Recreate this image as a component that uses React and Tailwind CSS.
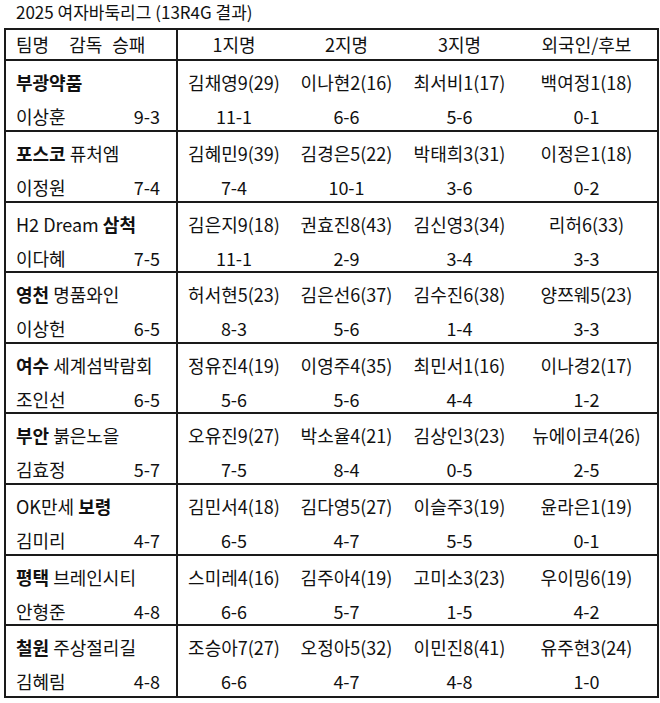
import React from "react";

const teams = [
  {
    name: [["부광약품", true]],
    coach: "이상훈",
    record: "9-3",
    h: "h-[71px]",
    players: [
      ["김채영9(29)", "11-1"],
      ["이나현2(16)", "6-6"],
      ["최서비1(17)", "5-6"],
      ["백여정1(18)", "0-1"],
    ],
  },
  {
    name: [["포스코", true], [" 퓨처엠", false]],
    coach: "이정원",
    record: "7-4",
    h: "h-[71px]",
    players: [
      ["김혜민9(39)", "7-4"],
      ["김경은5(22)", "10-1"],
      ["박태희3(31)", "3-6"],
      ["이정은1(18)", "0-2"],
    ],
  },
  {
    name: [["H2 Dream ", false], ["삼척", true]],
    coach: "이다혜",
    record: "7-5",
    h: "h-[70px]",
    players: [
      ["김은지9(18)", "11-1"],
      ["권효진8(43)", "2-9"],
      ["김신영3(34)", "3-4"],
      ["리허6(33)", "3-3"],
    ],
  },
  {
    name: [["영천", true], [" 명품와인", false]],
    coach: "이상헌",
    record: "6-5",
    h: "h-[71px]",
    players: [
      ["허서현5(23)", "8-3"],
      ["김은선6(37)", "5-6"],
      ["김수진6(38)", "1-4"],
      ["양쯔웨5(23)", "3-3"],
    ],
  },
  {
    name: [["여수", true], [" 세계섬박람회", false]],
    coach: "조인선",
    record: "6-5",
    h: "h-[70px]",
    players: [
      ["정유진4(19)", "5-6"],
      ["이영주4(35)", "5-6"],
      ["최민서1(16)", "4-4"],
      ["이나경2(17)", "1-2"],
    ],
  },
  {
    name: [["부안", true], [" 붉은노을", false]],
    coach: "김효정",
    record: "5-7",
    h: "h-[71px]",
    players: [
      ["오유진9(27)", "7-5"],
      ["박소율4(21)", "8-4"],
      ["김상인3(23)", "0-5"],
      ["뉴에이코4(26)", "2-5"],
    ],
  },
  {
    name: [["OK만세 ", false], ["보령", true]],
    coach: "김미리",
    record: "4-7",
    h: "h-[71px]",
    players: [
      ["김민서4(18)", "6-5"],
      ["김다영5(27)", "4-7"],
      ["이슬주3(19)", "5-5"],
      ["윤라은1(19)", "0-1"],
    ],
  },
  {
    name: [["평택", true], [" 브레인시티", false]],
    coach: "안형준",
    record: "4-8",
    h: "h-[70px]",
    players: [
      ["스미레4(16)", "6-6"],
      ["김주아4(19)", "5-7"],
      ["고미소3(23)", "1-5"],
      ["우이밍6(19)", "4-2"],
    ],
  },
  {
    name: [["철원", true], [" 주상절리길", false]],
    coach: "김혜림",
    record: "4-8",
    h: "h-[70px]",
    players: [
      ["조승아7(27)", "6-6"],
      ["오정아5(32)", "4-7"],
      ["이민진8(41)", "4-8"],
      ["유주현3(24)", "1-0"],
    ],
  },
];

const colW = ["w-[112px]", "w-[113px]", "w-[113px]", "w-[141px]"];

function TeamRow({ team, last }) {
  return (
    <div className={`flex ${team.h} ${last ? "" : "border-b-2 border-[#1a1a1a]"}`}>
      <div className="w-[172px] border-r-2 border-[#1a1a1a] pl-[10px] pr-[16px] pt-[4px]">
        <div className="leading-[34px] whitespace-pre">
          {team.name.map(([t, b], i) => (
            <span key={i} className={b ? "font-bold" : ""}>
              {t}
            </span>
          ))}
        </div>
        <div className="flex justify-between leading-[34px]">
          <span>{team.coach}</span>
          <span>{team.record}</span>
        </div>
      </div>
      {team.players.map(([p, r], i) => (
        <div key={i} className={`${colW[i]} pt-[4px] text-center`}>
          <div className="leading-[34px] whitespace-nowrap">{p}</div>
          <div className="leading-[34px]">{r}</div>
        </div>
      ))}
    </div>
  );
}

export default function App() {
  return (
    <div className="w-[660px] h-[703px] bg-white text-[#111] font-['Noto_Sans_CJK_KR','Noto_Sans',sans-serif]">
      <div className="h-[28px] pl-[16px] text-[17px] leading-[24px]">
        2025 여자바둑리그 (13R4G 결과)
      </div>
      <div className="ml-[4px] w-[655px] border-2 border-[#1a1a1a] text-[18px]">
        <div className="flex h-[31px] border-b-2 border-[#1a1a1a]">
          <div className="w-[172px] border-r-2 border-[#1a1a1a] pl-[10px] flex items-center">
            <span>팀명</span>
            <span className="ml-[20px]">감독</span>
            <span className="ml-[10px]">승패</span>
          </div>
          {["1지명", "2지명", "3지명", "외국인/후보"].map((h, i) => (
            <div key={h} className={`${colW[i]} flex items-center justify-center`}>
              {h}
            </div>
          ))}
        </div>
        {teams.map((t, i) => (
          <TeamRow key={i} team={t} last={i === teams.length - 1} />
        ))}
      </div>
    </div>
  );
}
